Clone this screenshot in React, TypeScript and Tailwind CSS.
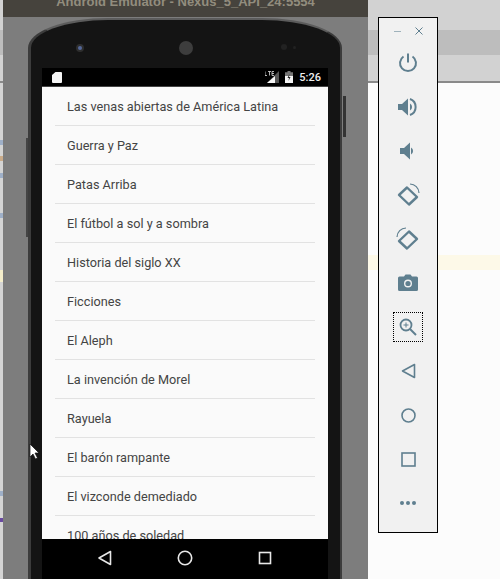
import React from "react";

const books = [
  "Las venas abiertas de América Latina",
  "Guerra y Paz",
  "Patas Arriba",
  "El fútbol a sol y a sombra",
  "Historia del siglo XX",
  "Ficciones",
  "El Aleph",
  "La invención de Morel",
  "Rayuela",
  "El barón rampante",
  "El vizconde demediado",
  "100 años de soledad",
];

function BookRow({ title }: { title: string }) {
  return (
    <div className="mx-[13px] h-[39px] shrink-0 border-b border-[#e2e2e2] pl-3 pt-[11px] text-[12.7px] leading-[18px] text-[#444444]">
      {title}
    </div>
  );
}

function Phone() {
  return (
    <div className="absolute left-[25px] top-[18px] h-[600px] w-[314px] rounded-t-[80px_30px] border-x-[3px] border-t-2 border-r-2 border-[#3c3c3c] border-t-[#5c5c5c] bg-[#141414] pl-[11px] pr-[12px] pt-[48px]">
      <div className="absolute left-[45px] top-[24px] flex h-[8px] w-[8px] items-center justify-center rounded-full bg-[#2e2e2e]">
        <div className="h-[4px] w-[4px] rounded-full bg-[#55689a]" />
      </div>
      <div className="absolute left-[148px] top-[21px] h-[14px] w-[14px] rounded-full bg-[#3d3d3d]" />
      <div className="absolute left-[250px] top-[24px] h-[6px] w-[6px] rounded-full bg-[#222222]" />
      <div className="absolute left-[262px] top-[26px] h-[3px] w-[3px] rounded-full bg-[#222222]" />
      <div className="absolute left-[-5px] top-[118px] h-[99px] w-[2px] bg-[#444444]" />
      <div className="absolute left-[312px] top-[76px] h-[41px] w-[3px] bg-[#333333]" />
      <div className="flex h-[19px] items-center justify-between border-b border-[#444444] bg-black pl-[10px] pr-[7px]">
        <svg width="10" height="11" viewBox="0 0 10 11">
          <path d="M3.500 0H9a1 1 0 0 1 1 1v9a1 1 0 0 1-1 1H1a1 1 0 0 1-1-1V3z" fill="#f5f5f5" />
        </svg>
        <div className="flex items-center gap-[6px]">
          <svg width="14" height="12" viewBox="0 0 14 12">
            <path d="M14 0v12H2z" fill="#555555" />
            <path d="M10 5v7H2z" fill="#f5f5f5" />
            <path d="M0 0.500v4h2M3 .500h3M4.500 .500v4M9 .500H7v4h2M7 2.500h2" stroke="#dddddd" strokeWidth=".8" fill="none" />
          </svg>
          <svg width="8" height="12" viewBox="0 0 8 12">
            <path d="M2.500 0h3v1.200H8V12H0V1.200h2.500z" fill="#777777" />
            <path d="M0 5h8v7H0z" fill="#f5f5f5" />
            <path d="M4.500 3 2.500 7h1.500l-.5 3 2-4H4z" fill="#222222" />
          </svg>
          <span className="font-['Roboto',sans-serif] text-[11px] font-medium leading-none text-[#eeeeee]">5:26</span>
        </div>
      </div>
      <div className="flex h-[452px] flex-col overflow-hidden bg-[#fafafa] font-['Roboto',sans-serif]">
        {books.map((b) => (
          <BookRow key={b} title={b} />
        ))}
      </div>
      <div className="flex h-[40px] items-center justify-center gap-[62px] bg-black pb-[2px]">
        <svg width="18" height="18" viewBox="0 0 18 18" fill="none" stroke="#e8e8e8" strokeWidth="1.600">
          <path d="M14.500 2.500v13L3 9z" strokeLinejoin="round" />
        </svg>
        <svg width="18" height="18" viewBox="0 0 18 18" fill="none" stroke="#e8e8e8" strokeWidth="1.600">
          <circle cx="9" cy="9" r="6.700" />
        </svg>
        <svg width="18" height="18" viewBox="0 0 18 18" fill="none" stroke="#e8e8e8" strokeWidth="1.600">
          <rect x="3.500" y="3.500" width="11" height="11" />
        </svg>
      </div>
    </div>
  );
}

function EmulatorWindow() {
  return (
    <div className="absolute left-[3px] top-0 h-[579px] w-[365px] overflow-hidden bg-[#7d7d7d]">
      <div className="flex h-[17px] items-start justify-center overflow-hidden bg-[#46433d] font-['Liberation_Sans',sans-serif] text-[13px] font-bold leading-[20px] text-[#928d7e]">
        <span className="-mt-[8px]">Android Emulator - Nexus_5_API_24:5554</span>
      </div>
      <Phone />
    </div>
  );
}

const iconColor = "#5f7f8f";

function ToolIcon({ children, focused }: { children: React.ReactNode; focused?: boolean }) {
  return (
    <div className="flex h-[44px] items-center justify-center">
      <div className={focused ? "flex h-[30px] w-[30px] items-center justify-center border border-dotted border-black" : "flex h-[30px] w-[30px] items-center justify-center"}>
        {children}
      </div>
    </div>
  );
}

function Toolbar() {
  return (
    <div className="absolute left-[378px] top-[17px] h-[516px] w-[60px] border border-black bg-[#f1f1f1]">
      <div className="flex h-[23px] items-start gap-[14px] pl-[15px] pt-[9px]">
        <div className="mt-[4px] h-[1px] w-[7px] bg-[#9fb2bb]" />
        <svg width="8" height="8" viewBox="0 0 8 8" stroke={iconColor} strokeWidth="1">
          <path d="M.500.500l7 7M7.500.500l-7 7" />
        </svg>
      </div>
      <ToolIcon>
        <svg width="20" height="20" viewBox="0 0 20 20" fill="none" stroke={iconColor} strokeWidth="2">
          <path d="M10 0.500v9" />
          <path d="M5.500 3.500a8 8 0 1 0 9 0" />
        </svg>
      </ToolIcon>
      <ToolIcon>
        <svg width="20" height="20" viewBox="0 0 20 20" fill="none">
          <path d="M0 7v6h4l6 5.500V1.500L4 7z" fill={iconColor} />
          <path d="M12 6.500a4 4 0 0 1 0 7z" fill={iconColor} />
          <path d="M12 2a8.500 8.500 0 0 1 0 16" stroke={iconColor} strokeWidth="2" />
        </svg>
      </ToolIcon>
      <ToolIcon>
        <svg width="16" height="18" viewBox="0 0 16 18">
          <path d="M0 6v6h4l6 5.500V.500L4 6z" fill={iconColor} />
          <path d="M11 5.500a4 4 0 0 1 0 7z" fill={iconColor} />
        </svg>
      </ToolIcon>
      <ToolIcon>
        <svg width="24" height="24" viewBox="0 0 24 24" fill="none" stroke={iconColor}>
          <path d="M3 12l8-7.500L21 14l-8 7.500z" strokeWidth="2.400" strokeLinejoin="round" />
          <path d="M14 1c5 .2 8.800 4 9 9" strokeWidth="1.200" />
        </svg>
      </ToolIcon>
      <ToolIcon>
        <svg width="24" height="24" viewBox="0 0 24 24" fill="none" stroke={iconColor}>
          <path d="M21 12l-8-7.500L3 14l8 7.500z" strokeWidth="2.400" strokeLinejoin="round" />
          <path d="M10 1C5 1.200 1.200 5 1 10" strokeWidth="1.200" />
        </svg>
      </ToolIcon>
      <ToolIcon>
        <svg className="-mt-[2px]" width="20" height="17" viewBox="0 0 20 17">
          <path fillRule="evenodd" d="M1.500 2.500H6L7.500.500h5L14 2.500h4.500A1.500 1.500 0 0 1 20 4v11.500a1.500 1.500 0 0 1-1.500 1.500h-17A1.500 1.500 0 0 1 0 15.500V4a1.500 1.500 0 0 1 1.500-1.500zM10 5.500a4 4 0 1 0 0 8 4 4 0 0 0 0-8z" fill={iconColor} />
          <circle cx="10" cy="9.500" r="2.600" fill={iconColor} />
        </svg>
      </ToolIcon>
      <ToolIcon focused>
        <svg width="18" height="18" viewBox="0 0 18 18" fill="none" stroke={iconColor}>
          <circle cx="7" cy="7" r="5.500" strokeWidth="1.800" />
          <path d="M11 11l6 6" strokeWidth="2" />
          <path d="M4.500 7h5M7 4.500v5" strokeWidth="1" />
        </svg>
      </ToolIcon>
      <ToolIcon>
        <svg width="15" height="16" viewBox="0 0 15 16" fill="none" stroke={iconColor} strokeWidth="1.600">
          <path d="M13.500 1.500v13L1.500 8z" strokeLinejoin="round" />
        </svg>
      </ToolIcon>
      <ToolIcon>
        <svg width="15" height="15" viewBox="0 0 15 15" fill="none" stroke={iconColor} strokeWidth="1.600">
          <circle cx="7.500" cy="7.500" r="6.500" />
        </svg>
      </ToolIcon>
      <ToolIcon>
        <svg width="15" height="15" viewBox="0 0 15 15" fill="none" stroke={iconColor} strokeWidth="1.600">
          <rect x="1" y="1" width="13" height="13" />
        </svg>
      </ToolIcon>
      <ToolIcon>
        <div className="flex gap-[2px]">
          <div className="h-[4px] w-[4px] rounded-full bg-[#5f7f8f]" />
          <div className="h-[4px] w-[4px] rounded-full bg-[#5f7f8f]" />
          <div className="h-[4px] w-[4px] rounded-full bg-[#5f7f8f]" />
        </div>
      </ToolIcon>
    </div>
  );
}

// sliver of the window behind, with bits of its icons showing
function LeftSliver() {
  return (
    <div className="absolute left-0 top-[83px] flex h-[496px] w-[3px] flex-col bg-[#d4d4d4]">
      <div className="mt-[57px] h-[5px] bg-[#9fb0c8]" />
      <div className="mt-[11px] h-[5px] bg-[#c9ab8a]" />
      <div className="mt-[12px] h-[5px] bg-[#9fb0c8]" />
      <div className="mt-[35px] h-[5px] bg-[#9fb0c8]" />
      <div className="mt-[52px] h-[12px] bg-[#f5eecb]" />
      <div className="mt-[209px] h-[5px] bg-[#9fb0c8]" />
      <div className="mt-[22px] h-[4px] bg-[#6a4aa0]" />
    </div>
  );
}

export default function App() {
  return (
    <div className="relative h-[579px] w-[500px] overflow-hidden bg-[#fcfcfc]">
      {/* desktop window behind the emulator */}
      <div className="h-[30px] bg-[#d2d2d2]" />
      <div className="h-[25px] bg-[#bdbdbd]" />
      <div className="h-[26px] bg-[#d2d2d2]" />
      <div className="h-[2px] bg-[#8a8a8a]" />
      <div className="mt-[172px] h-[15px] bg-[#fdf9e8]" />
      <LeftSliver />
      <Toolbar />
      <EmulatorWindow />
      <svg className="absolute left-[29px] top-[443px]" width="11" height="17" viewBox="0 0 11 17">
        <path d="M1 1v13l3-3 2.500 5 2-1-2.500-5h4z" fill="#ffffff" stroke="#111111" strokeWidth=".7" />
      </svg>
    </div>
  );
}
